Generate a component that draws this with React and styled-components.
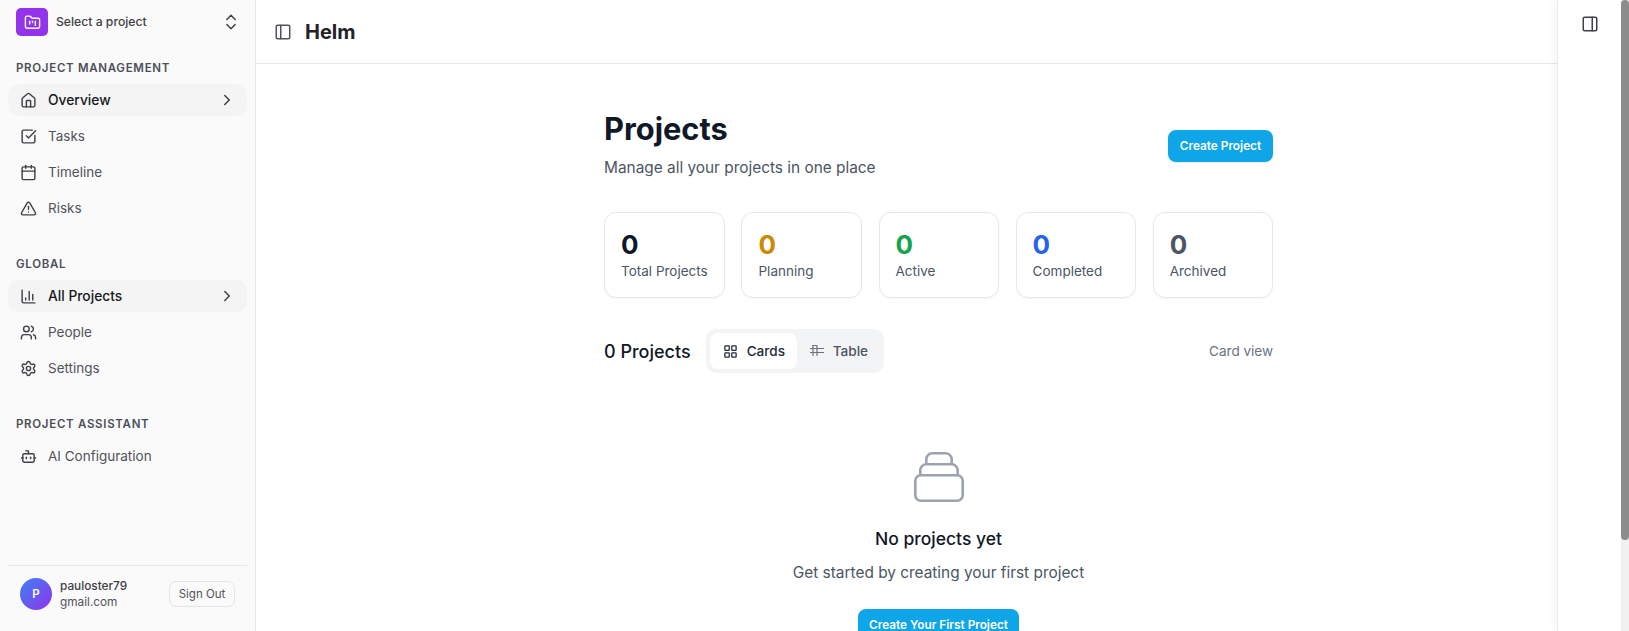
import React from 'react';
import styled, { createGlobalStyle } from 'styled-components';
import {
  Home, SquareCheckBig, Calendar, TriangleAlert, ChartColumn, Users, Settings, Bot,
  ChevronRight, ChevronsUpDown, PanelLeft, PanelRight, FolderKanban, LayoutGrid,
} from 'lucide-react';

const GlobalStyle = createGlobalStyle`
  html, body { margin: 0; padding: 0; background: #fff; }
  body { font-family: Inter, "Noto Sans", sans-serif; color: #111827; }
  * { box-sizing: border-box; }
`;

const Shell = styled.div`
  display: flex;
  height: 100vh;
  overflow: hidden;
`;

const Sidebar = styled.aside`
  flex: none;
  width: 256px;
  display: flex;
  flex-direction: column;
  padding: 0 8px;
  background: #fafafa;
  border-right: 1px solid #e5e7eb;
`;

const ProjectPicker = styled.div`
  display: flex;
  align-items: center;
  height: 44px;
  padding: 0 6px 0 8px;
  margin-bottom: 16px;
`;

const ProjectLogo = styled.div`
  width: 32px;
  height: 28px;
  border-radius: 5px;
  background: #9333ea;
  color: #fff;
  display: flex;
  align-items: center;
  justify-content: center;
`;

const ProjectName = styled.span`
  flex: 1;
  margin-left: 8px;
  padding-bottom: 2px;
  font-size: 12.2px;
  font-weight: 500;
  color: #3f3f46;
`;

const SectionLabel = styled.div`
  height: 16px;
  line-height: 16px;
  padding: 0 8px;
  margin-bottom: 8px;
  font-size: 11.5px;
  font-weight: 600;
  letter-spacing: 0.7px;
  color: #4b4f58;
`;

const Section = styled.div`
  margin-bottom: ${p => p.$gap}px;
`;

const NavRow = styled.div`
  display: flex;
  align-items: center;
  height: 32px;
  margin-bottom: 4px;
  padding: 0 11px 0 12px;
  border-radius: 10px;
  font-size: ${p => p.$active ? 13.8 : 13.5}px;
  color: ${p => p.$active ? '#18181b' : '#52525b'};
  font-weight: ${p => p.$active ? 500 : 400};
  background: ${p => p.$active ? '#f4f4f5' : 'transparent'};
  svg { flex: none; color: #3f3f46; }
`;

const NavLabel = styled.span`
  flex: 1;
  margin-left: 11px;
`;

const UserBox = styled.div`
  margin-top: auto;
  height: 66px;
  display: flex;
  align-items: flex-start;
  padding: 12px 12px 0;
  border-top: 1px solid #e5e7eb;
`;

const Avatar = styled.div`
  flex: none;
  width: 32px;
  height: 32px;
  border-radius: 50%;
  background: linear-gradient(135deg, #3b82f6, #9333ea);
  color: #fff;
  font-size: 11.5px;
  font-weight: 600;
  display: flex;
  align-items: center;
  justify-content: center;
`;

const UserText = styled.div`
  flex: 1;
  margin-left: 8px;
  font-size: 11.8px;
  line-height: 16px;
  color: #52525b;
`;

const UserName = styled.div`
  color: #3f3f46;
  font-weight: 500;
`;

const SignOut = styled.button`
  width: 66px;
  height: 26px;
  margin-top: 3px;
  padding: 0;
  background: #fafafa;
  border: 1px solid #e4e4e7;
  border-radius: 7px;
  font: 400 11.5px Inter, sans-serif;
  color: #52525b;
`;

const Center = styled.div`
  position: relative;
  flex: 1;
  min-width: 0;
  overflow: hidden;
`;

const TopBar = styled.header`
  height: 64px;
  display: flex;
  align-items: center;
  padding: 0 18px;
  border-bottom: 1px solid #e5e7eb;
  color: #52525b;
`;

const BrandName = styled.h1`
  margin: 0 0 0 13px;
  font-size: 20px;
  font-weight: 700;
  color: #1f2328;
`;

const Content = styled.main`
  width: 669px;
  margin: 0 auto;
  padding-top: 47px;
`;

const PageHead = styled.div`
  display: flex;
  justify-content: space-between;
  align-items: flex-start;
`;

const Title = styled.h2`
  margin: 0;
  font-size: 30.8px;
  line-height: 36px;
  font-weight: 700;
  color: #111827;
`;

const Subtitle = styled.p`
  margin: 9px 0 0;
  font-size: 15.4px;
  line-height: 24px;
  color: #4b5563;
`;

const SkyButton = styled.button`
  display: block;
  flex: none;
  border: 0;
  border-radius: 8px;
  padding: 0;
  width: ${p => p.$w}px;
  height: 32px;
  margin: ${p => p.$m || 0};
  background: #0ea5e9;
  color: #fff;
  font: 600 11.8px Inter, sans-serif;
  box-shadow: 0 1px 2px rgba(0,0,0,.08);
`;

const Stats = styled.div`
  display: grid;
  grid-template-columns: repeat(5, 1fr);
  gap: 16.75px;
  margin-top: 32px;
`;

const StatCard = styled.div`
  height: 86px;
  padding: 18px 16px 0;
  border: 1px solid #e5e7eb;
  border-radius: 12px;
  box-shadow: 0 1px 2px rgba(0,0,0,.04);
`;

const StatValue = styled.div`
  font-size: 26px;
  line-height: 28px;
  font-weight: 700;
  color: ${p => p.$color};
`;

const StatLabel = styled.div`
  margin-top: 2px;
  font-size: 13.5px;
  line-height: 20px;
  white-space: nowrap;
  color: #4b5563;
`;

const Toolbar = styled.div`
  display: flex;
  align-items: center;
  margin-top: 31px;
  height: 44px;
`;

const Count = styled.div`
  font-size: 18px;
  font-weight: 500;
  color: #111827;
`;

const Toggle = styled.div`
  display: flex;
  margin-left: 15px;
  padding: 4px;
  border-radius: 10px;
  background: #f3f4f6;
`;

const ToggleItem = styled.div`
  display: flex;
  align-items: center;
  gap: 9px;
  height: 36px;
  width: ${p => p.$w}px;
  padding-left: 13px;
  border-radius: 8px;
  font-size: 13.6px;
  font-weight: 500;
  background: ${p => p.$on ? '#fff' : 'transparent'};
  color: ${p => p.$on ? '#1f2937' : '#4b5563'};
`;

const ViewHint = styled.div`
  margin-left: auto;
  font-size: 13.5px;
  color: #6b7280;
`;

const Empty = styled.div`
  display: flex;
  flex-direction: column;
  align-items: center;
  margin-top: 75px;
  color: #9ca3af;
`;

const EmptyTitle = styled.h3`
  margin: 21px 0 0;
  font-size: 17.5px;
  line-height: 28px;
  font-weight: 500;
  color: #111827;
`;

const EmptyText = styled.p`
  margin: 8px 0 0;
  font-size: 15.4px;
  line-height: 24px;
  color: #4b5563;
`;

const RightPanel = styled.aside`
  position: absolute;
  top: 0;
  right: 0;
  bottom: 0;
  width: 64px;
  display: flex;
  justify-content: center;
  padding: 15px 0 0 1px;
  background: #fff;
  border-left: 1px solid #ececee;
  box-shadow: -3px 0 8px rgba(0,0,0,.04);
  color: #3f3f46;
`;

const ScrollTrack = styled.div`
  flex: none;
  width: 8px;
  background: #f1f1f1;
`;

const ScrollThumb = styled.div`
  height: 540px;
  border-radius: 4px;
  background: #8c8c8c;
`;

const TableGlyph = () => (
  <svg width="14" height="14" viewBox="0 0 14 14" fill="none" stroke="#6b7280" strokeWidth="1.2" strokeLinecap="round">
    <path d="M2.5 1.5H7M.5 4.5h13M.5 8.5h13M3 1.5v10M7 1.5v10" />
  </svg>
);

const StackGlyph = () => (
  <svg width="56" height="56" viewBox="0 0 56 56" fill="none" stroke="currentColor" strokeWidth="2.6" strokeLinejoin="round">
    <rect x="4.3" y="27.3" width="47.4" height="25.4" rx="5.5" />
    <path d="M9.3 27.3v-5a6 6 0 0 1 6-6h25.4a6 6 0 0 1 6 6v5" />
    <path d="M15.3 16.3v-5a6 6 0 0 1 6-6h13.4a6 6 0 0 1 6 6v5" />
  </svg>
);

const management = [
  { label: 'Overview', Icon: Home, active: true },
  { label: 'Tasks', Icon: SquareCheckBig },
  { label: 'Timeline', Icon: Calendar },
  { label: 'Risks', Icon: TriangleAlert },
];

const global = [
  { label: 'All Projects', Icon: ChartColumn, active: true },
  { label: 'People', Icon: Users },
  { label: 'Settings', Icon: Settings },
];

const stats = [
  { label: 'Total Projects', color: '#0f172a' },
  { label: 'Planning', color: '#ca8a04' },
  { label: 'Active', color: '#16a34a' },
  { label: 'Completed', color: '#2563eb' },
  { label: 'Archived', color: '#4b5563' },
];

const NavItem = ({ label, Icon, active }) => (
  <NavRow $active={active}>
    <Icon size={17} strokeWidth={2} />
    <NavLabel>{label}</NavLabel>
    {active && <ChevronRight size={18} strokeWidth={2} />}
  </NavRow>
);

export default function App() {
  return (
    <Shell>
      <GlobalStyle />
      <Sidebar>
        <ProjectPicker>
          <ProjectLogo><FolderKanban size={17} /></ProjectLogo>
          <ProjectName>Select a project</ProjectName>
          <ChevronsUpDown size={20} strokeWidth={1.75} color="#3f3f46" />
        </ProjectPicker>
        <Section $gap={28}>
          <SectionLabel>PROJECT MANAGEMENT</SectionLabel>
          {management.map(item => <NavItem key={item.label} {...item} />)}
        </Section>
        <Section $gap={28}>
          <SectionLabel>GLOBAL</SectionLabel>
          {global.map(item => <NavItem key={item.label} {...item} />)}
        </Section>
        <Section $gap={0}>
          <SectionLabel>PROJECT ASSISTANT</SectionLabel>
          <NavItem label="AI Configuration" Icon={Bot} />
        </Section>
        <UserBox>
          <Avatar>P</Avatar>
          <UserText>
            <UserName>pauloster79</UserName>
            <div>gmail.com</div>
          </UserText>
          <SignOut>Sign Out</SignOut>
        </UserBox>
      </Sidebar>

      <Center>
        <TopBar>
          <PanelLeft size={18} strokeWidth={2} />
          <BrandName>Helm</BrandName>
        </TopBar>
        <Content>
          <PageHead>
            <div>
              <Title>Projects</Title>
              <Subtitle>Manage all your projects in one place</Subtitle>
            </div>
            <SkyButton $w={105} $m="19px 0 0">Create Project</SkyButton>
          </PageHead>
          <Stats>
            {stats.map(s => (
              <StatCard key={s.label}>
                <StatValue $color={s.color}>0</StatValue>
                <StatLabel>{s.label}</StatLabel>
              </StatCard>
            ))}
          </Stats>
          <Toolbar>
            <Count>0 Projects</Count>
            <Toggle>
              <ToggleItem $on $w={87}><LayoutGrid size={15} strokeWidth={2} />Cards</ToggleItem>
              <ToggleItem $w={83}><TableGlyph />Table</ToggleItem>
            </Toggle>
            <ViewHint>Card view</ViewHint>
          </Toolbar>
          <Empty>
            <StackGlyph />
            <EmptyTitle>No projects yet</EmptyTitle>
            <EmptyText>Get started by creating your first project</EmptyText>
            <SkyButton $w={161} $m="24px 0 0">Create Your First Project</SkyButton>
          </Empty>
        </Content>
        <RightPanel>
          <PanelRight size={18} strokeWidth={2} />
        </RightPanel>
      </Center>

      <ScrollTrack><ScrollThumb /></ScrollTrack>
    </Shell>
  );
}
